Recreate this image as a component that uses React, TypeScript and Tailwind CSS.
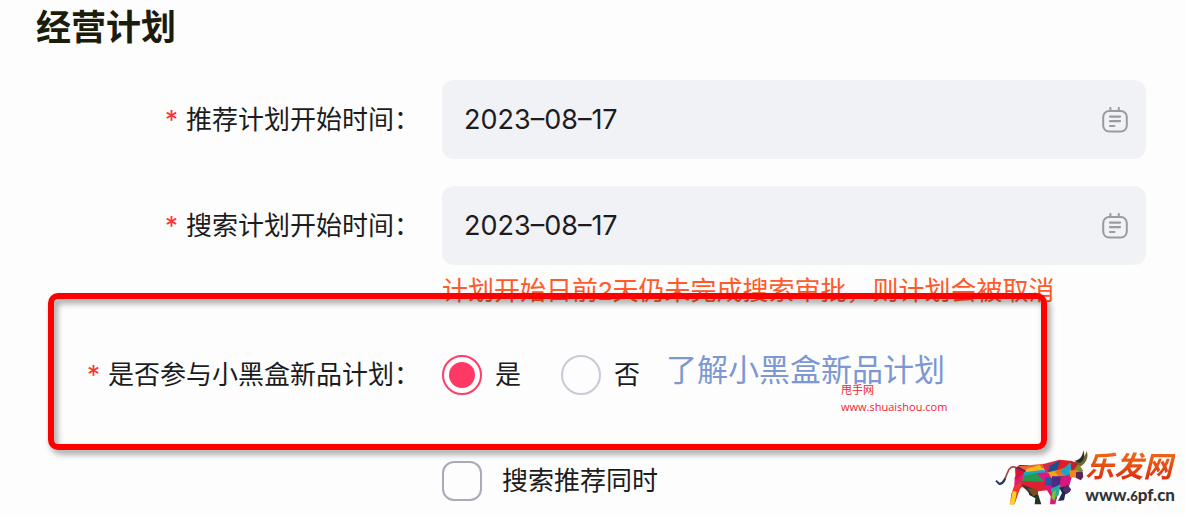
import { useState } from 'react'

const textFont = 'font-["Liberation_Sans","Noto_Sans_CJK_SC",sans-serif]'

function CalendarIcon() {
  return (
    <svg viewBox="0 0 26 26" className="size-[26px] text-[#9b9b9d]" fill="none" stroke="currentColor" strokeLinecap="round" aria-hidden="true">
      <rect x="1.2" y="4" width="23.6" height="20.6" rx="6" strokeWidth="2" />
      <path d="M8.4 .9v3M16.8 .9v3" strokeWidth="2" />
      <path d="M8 9.6h10M8 14.2h10M8 19h4.4" strokeWidth="2.2" />
    </svg>
  )
}

function BullLogo() {
  return (
    <svg viewBox="30 28 285 172" className="w-[95px]" aria-hidden="true">
      <path d="M98 84C84 78 76 84 70 100C64 116 58 132 46 132" fill="none" stroke="#a8483f" strokeWidth="5" />
      <path d="M64 116C60 126 54 133 46 133L36 123" fill="none" stroke="#1d3c5c" strokeWidth="6" />
      <path d="M264 66C284 70 302 56 308 34C316 54 304 76 284 82Z" fill="#6b6a31" />
      <path d="M270 64C288 62 296 50 298 32C304 50 300 64 288 70Z" fill="#2c2f27" />
      <polygon points="94,86 106,76 134,76 124,106 98,124" fill="#7c1d52" />
      <polygon points="102,80 180,72 188,86 128,94" fill="#f0642b" />
      <polygon points="126,88 166,76 180,92 124,102" fill="#f6b91b" />
      <polygon points="176,74 226,60 208,92 184,100" fill="#ce2d4f" />
      <polygon points="226,60 266,64 234,94 202,94" fill="#e31d24" />
      <polygon points="198,78 228,62 218,98 190,104" fill="#1d4f8d" />
      <polygon points="92,112 124,98 120,136 90,164" fill="#e41a75" />
      <polygon points="94,86 124,98 94,122" fill="#d71535" />
      <polygon points="90,140 118,122 102,164 92,194 78,194 82,162" fill="#ee352e" />
      <polygon points="86,154 98,156 92,194 76,194 82,176" fill="#f7d321" />
      <polygon points="120,98 180,90 192,106 114,132" fill="#1ba7c2" />
      <polygon points="120,108 158,100 190,130 114,128" fill="#24994f" />
      <polygon points="112,124 190,126 202,150 138,158 112,140" fill="#df2230" />
      <polygon points="158,100 196,98 216,122 186,132" fill="#e11489" />
      <polygon points="112,134 150,148 154,168 138,164" fill="#343434" />
      <polygon points="132,150 158,150 172,194 152,194 154,176 136,166" fill="#25331f" />
      <polygon points="130,146 162,148 162,164 148,170" fill="#7f4a21" />
      <polygon points="192,98 226,90 238,122 204,118" fill="#f5a51a" />
      <polygon points="212,96 240,84 258,106 236,124" fill="#ef7021" />
      <polygon points="228,94 268,64 266,104 248,112" fill="#16a6c6" />
      <polygon points="184,112 216,118 208,148 182,140" fill="#2b56a0" />
      <polygon points="204,110 242,110 232,146 202,154" fill="#4c2a86" />
      <polygon points="230,112 266,102 256,138 226,148" fill="#d9167d" />
      <polygon points="178,134 208,142 220,170 214,194 198,194 200,170" fill="#e11479" />
      <polygon points="200,148 230,134 224,166 210,178" fill="#25ad9a" />
      <polygon points="206,156 216,152 212,184 202,174" fill="#84bf3b" />
      <polygon points="226,144 254,138 258,156 244,164 240,182 222,184 234,160" fill="#1f2a4d" />
      <polygon points="250,134 262,150 248,164 236,150" fill="#4f2e6e" />
      <polygon points="260,64 288,74 282,92 262,98" fill="#c71c29" />
      <polygon points="284,72 298,94 276,106 268,92" fill="#7d8c2c" />
      <polygon points="256,92 282,92 286,116 258,112" fill="#ef8623" />
      <polygon points="276,98 296,96 298,112 290,122 276,114" fill="#5e2355" />
    </svg>
  )
}

function FieldLabel({ htmlFor, id, children }: { htmlFor?: string; id?: string; children: React.ReactNode }) {
  const Tag = htmlFor ? 'label' : 'span'
  return (
    <Tag htmlFor={htmlFor} id={id} className="flex w-[420px] shrink-0 items-center justify-end gap-2 whitespace-nowrap">
      <span className='font-["Inter",sans-serif] text-[#ff3030]'>*</span>
      <span>{children}</span>
    </Tag>
  )
}

function DateField({ id, label }: { id: string; label: string }) {
  const [date, setDate] = useState('2023–08–17')
  return (
    <div className="flex items-center gap-[22px]">
      <FieldLabel htmlFor={id}>{label}</FieldLabel>
      <div className="flex h-[79px] min-w-0 flex-1 items-center rounded-xl bg-[#f1f2f6] pr-[18px] pl-[22px]">
        <input
          id={id}
          value={date}
          onChange={(e) => setDate(e.target.value)}
          className='min-w-0 flex-1 bg-transparent font-["Inter",sans-serif] text-[27px] outline-none'
        />
        <button type="button" aria-label={label}>
          <CalendarIcon />
        </button>
      </div>
    </div>
  )
}

function RadioOption({ label, checked, onChange }: { label: string; checked: boolean; onChange: () => void }) {
  return (
    <label className="flex items-center gap-[13px]">
      <input
        type="radio"
        name="join"
        checked={checked}
        onChange={onChange}
        className="size-10 appearance-none rounded-full border-2 border-[#c9cad6] checked:border-[#ff3d68] checked:bg-[#ff3864] checked:bg-clip-content checked:p-[5px]"
      />
      {label}
    </label>
  )
}

export default function App() {
  const [join, setJoin] = useState(true)
  const [together, setTogether] = useState(false)

  return (
    <main className={`relative min-h-screen overflow-hidden bg-[#fdfdfd] pr-[39px] text-[26px] leading-8 text-[#1c1c1e] ${textFont}`}>
      <h1 className="pt-1 pl-9 text-[35px] leading-[48px] font-bold text-[#1b1c0c]">经营计划</h1>

      <form className="flex flex-col pt-7">
        <div className="flex flex-col gap-[27px]">
          <DateField id="recommend-date" label="推荐计划开始时间：" />
          <DateField id="search-date" label="搜索计划开始时间：" />
        </div>
        <p className="mt-[10px] ml-[442px] whitespace-nowrap text-[#ff5a2b]">计划开始日前2天仍未完成搜索审批，则计划会被取消</p>

        <div className="relative mt-[21px] flex h-[94px] items-center gap-[22px]">
          <FieldLabel id="join-label">是否参与小黑盒新品计划：</FieldLabel>
          <div role="radiogroup" aria-labelledby="join-label" className="flex items-center gap-10">
            <RadioOption label="是" checked={join} onChange={() => setJoin(true)} />
            <RadioOption label="否" checked={!join} onChange={() => setJoin(false)} />
          </div>
          <a href="#" className="pb-2 pl-1 text-[31px] whitespace-nowrap text-[#7c97d3]">
            了解小黑盒新品计划
          </a>
          <div className="pointer-events-none absolute -top-[35px] right-[99px] -bottom-7 left-12 rounded-[10px] border-[6px] border-[#ff0000] drop-shadow-[3px_4px_3px_rgba(0,0,0,0.4)]" />
          <div className='absolute top-[53px] left-[841px] font-["Open_Sans","Noto_Sans_CJK_SC",sans-serif] text-[11px] leading-[17px] text-[#f5222d]'>
            <p>甩手网</p>
            <p>www.shuaishou.com</p>
          </div>
        </div>

        <label className="mt-[39px] ml-[442px] flex items-center gap-5 self-start">
          <input
            type="checkbox"
            checked={together}
            onChange={(e) => setTogether(e.target.checked)}
            className="size-10 appearance-none rounded-xl border-2 border-[#a9a9b8] checked:bg-[#ff3864]"
          />
          搜索推荐同时
        </label>
      </form>

      <div className="absolute right-[10px] bottom-[10px] flex items-start">
        <BullLogo />
        <div className="-ml-1 flex flex-col">
          <span className="bg-linear-to-b from-[#f0701a] to-[#d9130b] bg-clip-text text-[29px] leading-9 font-bold text-transparent italic">乐发网</span>
          <span className='font-["Lato",sans-serif] text-[17px] leading-5 font-black text-[#333333]'>
            www.<span className="text-[13px]">6</span>pf.cn
          </span>
        </div>
      </div>
    </main>
  )
}
